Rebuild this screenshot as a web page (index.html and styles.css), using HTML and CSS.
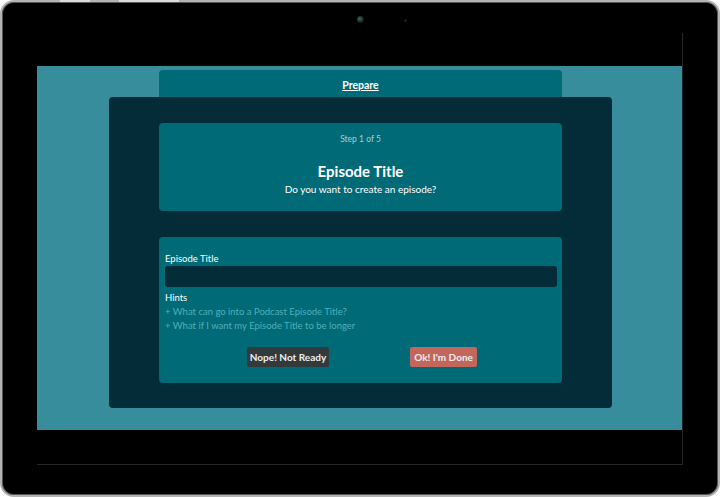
FILE: index.html
```html
<!DOCTYPE html>
<html>
<head>
<meta charset="utf-8">
<link rel="stylesheet" href="styles.css">
</head>
<body>
<div class="device">
  <span class="hw hw-a"></span>
  <span class="hw hw-b"></span>
  <div class="bezel-top">
    <span class="camera"></span>
    <span class="sensor"></span>
  </div>
  <div class="screen">
    <div class="screen-top"></div>
    <div class="app">
      <div class="tab"><a href="#" class="tab-link">Prepare</a></div>
      <div class="panel">
        <div class="card card-intro">
          <div class="step">Step 1 of 5</div>
          <h1 class="title">Episode Title</h1>
          <p class="subtitle">Do you want to create an episode?</p>
        </div>
        <div class="card card-form">
          <label class="field-label">Episode Title</label>
          <div class="input"></div>
          <div class="hints-label">Hints</div>
          <div class="hint">+ What can go into a Podcast Episode Title?</div>
          <div class="hint">+ What if I want my Episode Title to be longer</div>
          <div class="actions">
            <button class="btn btn-nope">Nope! Not Ready</button>
            <button class="btn btn-ok">Ok! I'm Done</button>
          </div>
        </div>
      </div>
    </div>
  </div>
</div>
</body>
</html>
```
FILE: styles.css
```css
* { box-sizing: border-box; }
html, body {
  margin: 0;
  padding: 0;
  background: #ffffff;
  width: 720px;
  height: 497px;
  overflow: hidden;
  font-family: "Lato", "Noto Sans", sans-serif;
}
.device {
  position: relative;
  width: 720px;
  height: 497px;
  background: #000;
  border: 2px solid #b3b3b3;
  border-radius: 14px;
  box-shadow: inset 0 0 0 1px #555;
  padding-left: 35px;
}
.hw {
  position: absolute;
  top: -2px;
  height: 2px;
  background: #dcdcdc;
}
.hw-a { left: 58px; width: 30px; }
.hw-b { left: 117px; width: 60px; }
.bezel-top {
  height: 31px;
  position: relative;
}
.camera {
  position: absolute;
  left: 320px;
  top: 14px;
  width: 7px;
  height: 7px;
  border-radius: 50%;
  background: radial-gradient(circle at 40% 40%, #3c6b66, #0c1716 70%);
}
.sensor {
  position: absolute;
  left: 367px;
  top: 17px;
  width: 3px;
  height: 3px;
  border-radius: 50%;
  background: #1c1c1c;
}
.screen {
  width: 646px;
  height: 432px;
  border-right: 1px solid #262626;
  border-bottom: 1px solid #262626;
}
.screen-top {
  height: 33px;
  background: #000;
}
.app {
  height: 364px;
  width: 645px;
  background: #388d9c;
  display: flex;
  flex-direction: column;
  align-items: center;
  padding-top: 4px;
  padding-left: 2px;
}
.tab {
  width: 403px;
  height: 27px;
  background: #016a77;
  border-radius: 4px 4px 0 0;
  display: flex;
  align-items: center;
  justify-content: center;
  padding-top: 2px;
}
.tab-link {
  color: #ffffff;
  font-size: 10.5px;
  font-weight: 700;
  text-decoration: underline;
  text-underline-offset: 1px;
}
.panel {
  width: 503px;
  height: 311px;
  background: #032b38;
  border-radius: 4px;
  display: flex;
  flex-direction: column;
  align-items: center;
  padding-top: 26px;
  gap: 26px;
}
.card {
  width: 403px;
  background: #016a77;
  border-radius: 4px;
}
.card-intro {
  height: 88px;
  display: flex;
  flex-direction: column;
  align-items: center;
  padding-top: 11px;
}
.step {
  color: #a3d0d4;
  font-size: 8.5px;
  line-height: 10px;
}
.title {
  margin: 17px 0 0 0;
  color: #ffffff;
  font-size: 15px;
  font-weight: 700;
  line-height: 20px;
}
.subtitle {
  margin: 1px 0 0 0;
  color: #ffffff;
  font-size: 10px;
  line-height: 14px;
}
.card-form {
  height: 146px;
  padding: 16px 5px 0 6px;
  display: flex;
  flex-direction: column;
}
.field-label {
  color: #ffffff;
  font-size: 9.5px;
  line-height: 12px;
}
.input {
  margin-top: 1px;
  height: 21px;
  background: #032b38;
  border-radius: 3px;
}
.hints-label {
  margin-top: 5px;
  margin-bottom: 1px;
  color: #ffffff;
  font-size: 9.5px;
  line-height: 12px;
}
.hint {
  color: #4cb0bb;
  font-size: 9.5px;
  line-height: 14px;
}
.actions {
  margin-top: 14px;
  display: flex;
  justify-content: center;
  gap: 81px;
  padding-left: 2px;
}
.btn {
  border: none;
  border-radius: 2px;
  height: 20px;
  padding: 0;
  white-space: nowrap;
  font-family: "Lato", "Noto Sans", sans-serif;
  font-size: 10px;
  font-weight: 700;
  color: #eeeeee;
}
.btn-nope {
  background: #323a3c;
  width: 82px;
}
.btn-ok {
  background: #c3665b;
  width: 67px;
}
```
